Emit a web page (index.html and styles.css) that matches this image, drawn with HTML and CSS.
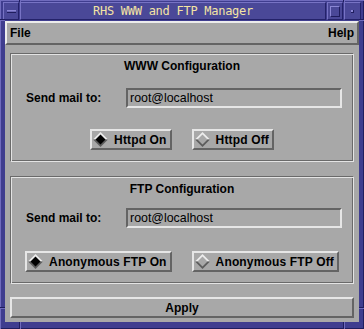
FILE: index.html
```html
<!DOCTYPE html>
<html>
<head>
<meta charset="utf-8">
<link rel="stylesheet" href="styles.css">
</head>
<body>
<div class="win">
  <i class="mark mk-tl-v"></i><i class="mark mk-tr-v"></i><i class="mark mk-bl-v"></i><i class="mark mk-br-v"></i>
  <i class="mark mk-lt-h"></i><i class="mark mk-rt-h"></i><i class="mark mk-lb-h"></i><i class="mark mk-rb-h"></i>
  <div class="titlebar">
    <div class="tbtn tmin"><span></span></div>
    <div class="ttl">RHS WWW and FTP Manager</div>
    <div class="tbtn tmax"><span></span></div>
    <div class="tbtn tclose"><span></span></div>
  </div>
  <div class="client">
    <div class="menubar"><span>File</span><span>Help</span></div>
    <div class="content">
      <section class="group g-www">
        <div class="gtitle">WWW Configuration</div>
        <div class="field">
          <span class="label">Send mail to:</span>
          <div class="entry">root@localhost</div>
        </div>
        <div class="radios">
          <div class="btn"><svg class="dia" viewBox="0 0 15 15" width="15" height="15"><polygon points="0,7.5 7.5,0 15,7.5" fill="#ececec"/><polygon points="0,7.5 7.5,15 15,7.5" fill="#5c5c5c"/><polygon points="2.5,7.5 7.5,2.5 12.5,7.5 7.5,12.5" fill="#000"/></svg><span>Httpd On</span></div>
          <div class="btn"><svg class="dia" viewBox="0 0 15 15" width="15" height="15"><polygon points="0,7.5 7.5,0 15,7.5" fill="#ececec"/><polygon points="0,7.5 7.5,15 15,7.5" fill="#5c5c5c"/><polygon points="2.5,7.5 7.5,2.5 12.5,7.5 7.5,12.5" fill="#a8a8a8"/></svg><span>Httpd Off</span></div>
        </div>
      </section>
      <section class="group g-ftp">
        <div class="gtitle">FTP Configuration</div>
        <div class="field">
          <span class="label">Send mail to:</span>
          <div class="entry">root@localhost</div>
        </div>
        <div class="radios">
          <div class="btn"><svg class="dia" viewBox="0 0 15 15" width="15" height="15"><polygon points="0,7.5 7.5,0 15,7.5" fill="#ececec"/><polygon points="0,7.5 7.5,15 15,7.5" fill="#5c5c5c"/><polygon points="2.5,7.5 7.5,2.5 12.5,7.5 7.5,12.5" fill="#000"/></svg><span>Anonymous FTP On</span></div>
          <div class="btn"><svg class="dia" viewBox="0 0 15 15" width="15" height="15"><polygon points="0,7.5 7.5,0 15,7.5" fill="#ececec"/><polygon points="0,7.5 7.5,15 15,7.5" fill="#5c5c5c"/><polygon points="2.5,7.5 7.5,2.5 12.5,7.5 7.5,12.5" fill="#a8a8a8"/></svg><span>Anonymous FTP Off</span></div>
        </div>
      </section>
      <div class="apply">Apply</div>
    </div>
  </div>
</div>
</body>
</html>
```
FILE: styles.css
```css
* { box-sizing: border-box; }
html, body { margin: 0; padding: 0; }
body { width: 364px; height: 329px; overflow: hidden; background: #3f3d8f; }

.win {
  position: relative;
  width: 364px;
  height: 329px;
  background: #3f3d8f;
  padding: 2px 3px 7px 3px;
  display: flex;
  flex-direction: column;
  box-shadow: inset 1px 1px 0 #6f6bbd, inset -1px -1px 0 #1f1d5e;
}

.mark { position: absolute; display: block; background: #1f1d5e; }
.mark::after { content: ""; position: absolute; background: #6f6bbd; }
.mk-tl-v, .mk-tr-v { top: 0; width: 1px; height: 2px; }
.mk-bl-v, .mk-br-v { bottom: 0; width: 1px; height: 7px; }
.mk-tl-v, .mk-bl-v { left: 19px; }
.mk-tr-v, .mk-br-v { left: 343px; }
.mk-tl-v::after, .mk-tr-v::after, .mk-bl-v::after, .mk-br-v::after { left: 1px; top: 0; width: 1px; height: 100%; }
.mk-lt-h, .mk-rt-h { top: 19px; height: 1px; }
.mk-lb-h, .mk-rb-h { top: 307px; height: 1px; }
.mk-lt-h, .mk-lb-h { left: 0; width: 5px; }
.mk-rt-h, .mk-rb-h { right: 0; width: 5px; }
.mk-lt-h::after, .mk-rt-h::after, .mk-lb-h::after, .mk-rb-h::after { left: 0; top: 1px; height: 1px; width: 100%; }

.titlebar {
  height: 18px;
  display: flex;
  gap: 1px;
  margin-bottom: 1px;
}
.tbtn, .ttl {
  background: #4a4898;
  border-top: 1px solid #7773c4;
  border-left: 1px solid #7773c4;
  border-bottom: 1px solid #24226a;
  border-right: 1px solid #24226a;
  display: flex;
  align-items: center;
  justify-content: center;
}
.tmin, .tmax { width: 16px; }
.tclose { width: 17px; }
.ttl {
  flex: 1;
  color: #f4e4a4;
  font-family: "DejaVu Sans Mono", monospace;
  font-size: 12px;
  letter-spacing: -0.27px;
  line-height: 16px;
  white-space: nowrap;
}
.tmin span {
  width: 9px; height: 3px;
  background: #6a66b6;
  border-top: 1px solid #8a86d4;
  border-bottom: 1px solid #1f1d5e;
  margin-top: 1px;
}
.tmax span {
  width: 10px; height: 11px;
  border-top: 1px solid #8a86d4;
  border-left: 1px solid #8a86d4;
  border-bottom: 1px solid #1f1d5e;
  border-right: 1px solid #1f1d5e;
}
.tclose span {
  width: 3px; height: 3px;
  background: #8a86d4;
  border-right: 1px solid #1f1d5e;
  border-bottom: 1px solid #1f1d5e;
}

.client {
  flex: 1;
  margin: 0 2px;
  background: #a8a8a8;
  display: flex;
  flex-direction: column;
  font-family: "Liberation Sans", Arial, sans-serif;
  font-size: 12px;
  color: #000;
}

.menubar {
  height: 24px;
  border-top: 2px solid #ececec;
  border-left: 2px solid #ececec;
  border-bottom: 2px solid #646464;
  border-right: 2px solid #646464;
  padding: 0 3px;
  display: flex;
  justify-content: space-between;
  align-items: center;
  font-weight: bold;
  line-height: 14px;
}

.content {
  flex: 1;
  padding: 8px 5px 0 5px;
  display: flex;
  flex-direction: column;
}

.group {
  border: 1px solid;
  border-color: #6a6a6a #e4e4e4 #e4e4e4 #6a6a6a;
  box-shadow: inset 1px 1px 0 #e4e4e4, inset -1px -1px 0 #6a6a6a;
  padding: 5px 11px 9px 15px;
  display: flex;
  flex-direction: column;
}
.g-www { height: 109px; }
.g-ftp { height: 108px; margin-top: 14px; }

.gtitle {
  text-align: center;
  font-weight: bold;
  line-height: 14px;
  margin: 0 -11px 0 -15px;
}

.field {
  display: flex;
  align-items: center;
  height: 20px;
  margin-top: 15px;
}
.g-ftp .field { margin-top: 12px; }
.label {
  width: 100px;
  font-weight: bold;
  line-height: 14px;
}
.entry {
  flex: 1;
  height: 20px;
  border-top: 2px solid #646464;
  border-left: 2px solid #646464;
  border-bottom: 2px solid #e6e6e6;
  border-right: 2px solid #e6e6e6;
  padding-left: 2px;
  font-size: 12.4px;
  line-height: 16px;
}

.radios {
  display: flex;
  justify-content: center;
  gap: 20px;
  margin: 21px -11px 0 -15px;
}
.g-ftp .radios { margin-top: 23px; }
.btn {
  height: 21px;
  display: flex;
  align-items: center;
  border-top: 2px solid #e6e6e6;
  border-left: 2px solid #e6e6e6;
  border-bottom: 2px solid #646464;
  border-right: 2px solid #646464;
  padding: 0 3px 0 1px;
  font-weight: bold;
  line-height: 14px;
  letter-spacing: 0.15px;
  white-space: nowrap;
}
.dia { display: block; margin-right: 6px; flex: none; }

.apply {
  height: 21px;
  margin-top: 13px;
  border-top: 2px solid #e6e6e6;
  border-left: 2px solid #e6e6e6;
  border-bottom: 2px solid #646464;
  border-right: 2px solid #646464;
  display: flex;
  align-items: center;
  justify-content: center;
  font-weight: bold;
  line-height: 14px;
}
```
